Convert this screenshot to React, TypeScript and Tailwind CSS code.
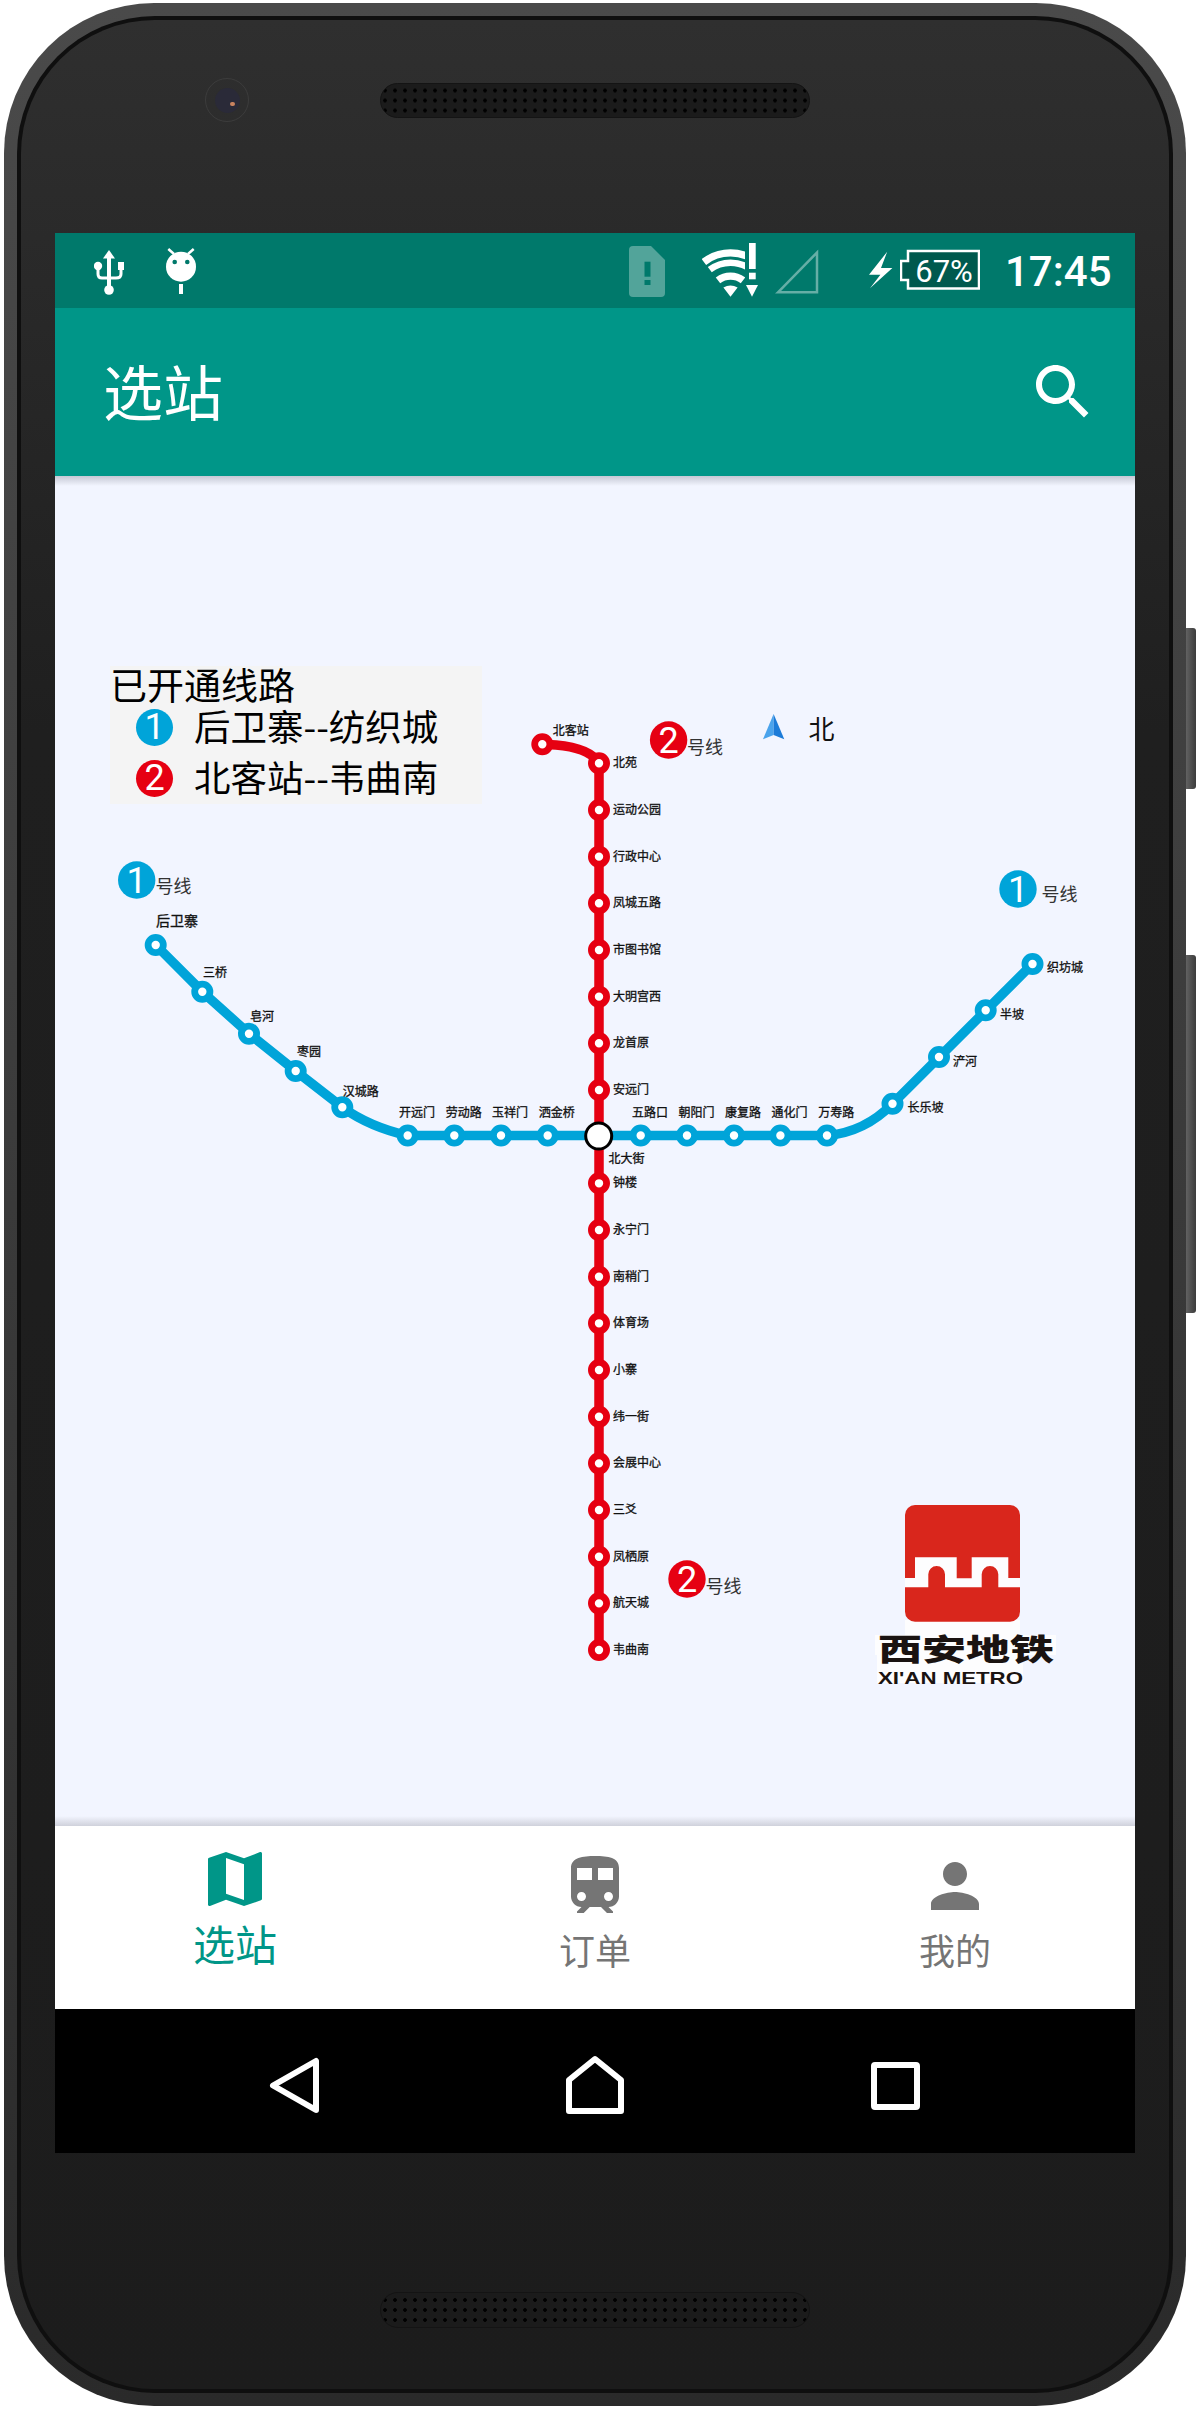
const line1 = [
  { name: '后卫寨', x: 155.7, y: 945, lx: 156, ly: 921, size: 14 },
  { name: '三桥', x: 202.3, y: 991.7, lx: 203, ly: 973 },
  { name: '皂河', x: 249, y: 1033.7, lx: 250, ly: 1017 },
  { name: '枣园', x: 295.7, y: 1071, lx: 297, ly: 1052 },
  { name: '汉城路', x: 342.3, y: 1107.3, lx: 342.7, ly: 1091.7 },
  { name: '开远门', x: 407.7, y: 1135.5, lx: 399, ly: 1113 },
  { name: '劳动路', x: 454.3, y: 1135.5, lx: 445.7, ly: 1113 },
  { name: '玉祥门', x: 501, y: 1135.5, lx: 492, ly: 1113 },
  { name: '洒金桥', x: 547.7, y: 1135.5, lx: 538.7, ly: 1113 },
  { name: '五路口', x: 640.7, y: 1135.5, lx: 632, ly: 1113 },
  { name: '朝阳门', x: 687, y: 1135.5, lx: 678.6, ly: 1113 },
  { name: '康复路', x: 734, y: 1135.5, lx: 725, ly: 1113 },
  { name: '通化门', x: 780.4, y: 1135.5, lx: 771.4, ly: 1113 },
  { name: '万寿路', x: 827, y: 1135.5, lx: 818.2, ly: 1113 },
  { name: '长乐坡', x: 892.5, y: 1103.7, lx: 907.5, ly: 1108.3 },
  { name: '浐河', x: 939, y: 1057, lx: 953, ly: 1061.7 },
  { name: '半坡', x: 985.7, y: 1010.3, lx: 1000, ly: 1015 },
  { name: '织坊城', x: 1032.5, y: 964, lx: 1047, ly: 968.3 },
]

const line2 = [
  '北苑', '运动公园', '行政中心', '凤城五路', '市图书馆', '大明宫西', '龙首原', '安远门',
  '', '钟楼', '永宁门', '南稍门', '体育场', '小寨', '纬一街', '会展中心', '三爻', '凤栖原', '航天城', '韦曲南',
]

const BLUE = '#00a4d9'
const RED = '#e60012'

const Node = ({ x, y, color }: { x: number; y: number; color: string }) => (
  <circle cx={x} cy={y} r={7.6} fill="#fff" stroke={color} strokeWidth={6.8} />
)

// station names are slightly heavier than the regular face in the picture
const Label = ({ x, y, size = 12, children }: { x: number; y: number; size?: number; children: string }) => (
  <text x={x} y={y - 1.5} fontSize={size} fill="#111" stroke="#111" strokeWidth={0.3} dominantBaseline="central">{children}</text>
)

const LineBadge = ({ x, y, num, color, tx, ty }: { x: number; y: number; num: string; color: string; tx: number; ty: number }) => (
  <g>
    <circle cx={x} cy={y} r={18.7} fill={color} />
    <text x={x} y={y + 1} fill="#fff" fontSize={36} textAnchor="middle" dominantBaseline="central" fontFamily="Roboto, sans-serif">{num}</text>
    <text x={tx - 1.5} y={ty - 1} fill="#333" fontSize={18} dominantBaseline="central">号线</text>
  </g>
)

const MetroMap = () => (
  <svg className="absolute inset-0 w-full h-full" viewBox="55 476 1080 1350">
    <path d="M542.3 744.3 L556 745 Q590 748 599 763.3 V1649.3" fill="none" stroke={RED} strokeWidth={9.5} />
    <path d="M155.7 945 L202.3 991.7 L249 1033.7 L295.7 1071 L342.3 1107.3 Q370 1127 407.7 1135.5 L827 1135.5 Q865 1132 892.5 1103.7 L1032.5 964" fill="none" stroke={BLUE} strokeWidth={9.5} />

    <Node x={542.3} y={744.3} color={RED} />
    <Label x={552.7} y={730.7}>北客站</Label>
    {line2.map((name, i) =>
      name ? (
        <g key={name}>
          <Node x={599} y={763.3 + 46.67 * i} color={RED} />
          <Label x={613} y={763.3 + 46.67 * i}>{name}</Label>
        </g>
      ) : null,
    )}
    <Label x={608.6} y={1159}>北大街</Label>

    {line1.map((s) => (
      <g key={s.name}>
        <Node x={s.x} y={s.y} color={BLUE} />
        <Label x={s.lx} y={s.ly} size={s.size || 12}>{s.name}</Label>
      </g>
    ))}
    <circle cx={598.7} cy={1136} r={13} fill="#fff" stroke="#000" strokeWidth={3} />

    <LineBadge x={136.7} y={880} num="1" color={BLUE} tx={157} ty={885.6} />
    <LineBadge x={668.6} y={740} num="2" color={RED} tx={688.6} ty={747} />
    <LineBadge x={1018} y={889} num="1" color={BLUE} tx={1043} ty={894} />
    <LineBadge x={687} y={1579} num="2" color={RED} tx={707} ty={1586} />

    {/* north arrow */}
    <polygon points="773.6,714 763,739.3 773.6,735" fill="#4aa3ec" />
    <polygon points="773.6,714 784.3,739.3 773.6,735" fill="#1c7bd8" />
    <text x={808.5} y={727} fontSize={26} fill="#111" dominantBaseline="central">北</text>

    {/* logo */}
    <rect x={905} y={1620} width={115} height={16} fill="#fdfdfe" />
    <rect x={875} y={1635} width={181} height={20} fill="#fdfdfe" />
    <rect x={877} y={1655} width={146} height={28} fill="#fdfdfe" />
    <rect x={905} y={1505} width={115} height={116.7} rx={10} fill="#d9261c" />
    <path d="M905 1578 H915 V1557.3 H956.7 V1578.3 H971.7 V1557.3 H1008.3 V1578 H1020 V1587.3 H998.3 V1574.3 A8.3 8.3 0 0 0 981.7 1574.3 V1587.3 H945 V1574.3 A8.3 8.3 0 0 0 928.3 1574.3 V1587.3 H905 Z" fill="#fdfdfe" />
    <text x={878} y={1647} fontSize={30} fontWeight={900} fill="#1a1311" dominantBaseline="central" textLength={176} lengthAdjust="spacingAndGlyphs">西安地铁</text>
    <text x={878} y={1678} fontSize={17} fontWeight={700} fill="#1a1311" dominantBaseline="central" textLength={145} lengthAdjust="spacingAndGlyphs" fontFamily="'Liberation Sans', sans-serif">XI'AN METRO</text>
  </svg>
)

const Legend = () => (
  <div className="absolute left-[55px] top-[190px] w-[372px] h-[138px] bg-[#f4f4f4] text-black text-[36.5px]">
    <div className="h-[38px] text-[37px] leading-[36px]">已开通线路</div>
    <div className="h-[46px] flex items-center pl-[26px] gap-[21px]">
      <span className="w-[37px] h-[37px] rounded-full bg-[#00a4d9] text-white flex items-center justify-center font-['Roboto',sans-serif] text-[36px]">1</span>
      <span className="-mt-[2px]">后卫寨--纺织城</span>
    </div>
    <div className="h-[46px] mt-[5px] flex items-center pl-[26px] gap-[21px]">
      <span className="w-[37px] h-[37px] rounded-full bg-[#e60012] text-white flex items-center justify-center font-['Roboto',sans-serif] text-[36px]">2</span>
      <span className="-mt-[2px]">北客站--韦曲南</span>
    </div>
  </div>
)

const StatusBar = () => (
  <div className="h-[75px] bg-[#00796b] flex text-white">
    {/* usb */}
    <svg className="ml-[39px]" width="30" height="75" viewBox="0 0 30 75" fill="#fff">
      <polygon points="15,17 21,25.5 9,25.5" />
      <rect x="13" y="25" width="4" height="32" />
      <circle cx="15" cy="57" r="4.8" />
      <circle cx="4" cy="33" r="4.2" />
      <rect x="24" y="29" width="6" height="8" />
      <path d="M4 33 V41 Q4 45 8 45 H22 Q27 45 27 41 V36" fill="none" stroke="#fff" strokeWidth="3" />
    </svg>
    {/* android debug */}
    <svg className="ml-[42px]" width="30" height="75" viewBox="0 0 30 75" fill="#fff">
      <circle cx="15" cy="33.7" r="15" />
      <rect x="13" y="51" width="4" height="10" />
      <path d="M2.3 16 L8 21 M27.7 16 L22 21" stroke="#fff" strokeWidth="2.5" />
      <circle cx="8.7" cy="29" r="2.3" fill="#00796b" />
      <circle cx="21.3" cy="29" r="2.3" fill="#00796b" />
    </svg>
    {/* sim */}
    <svg className="ml-[433px]" width="36" height="75" viewBox="0 0 36 75">
      <path d="M4 13 H22 L36 27 V60 Q36 64 32 64 H4 Q0 64 0 60 V17 Q0 13 4 13 Z" fill="#fff" fillOpacity="0.32" />
      <rect x="15.5" y="28.7" width="6" height="15" fill="#00796b" />
      <rect x="15.5" y="47" width="6" height="5" fill="#00796b" />
    </svg>
    {/* wifi */}
    <svg className="ml-[37px]" width="56" height="75" viewBox="0 0 56 75" fill="#fff">
      <clipPath id="wifi-clip"><rect x="0" y="0" width="43" height="75" /></clipPath>
      <g clipPath="url(#wifi-clip)" fill="none" stroke="#fff">
        <path d="M1.9 29 A43.7 43.7 0 0 1 55.1 29" strokeWidth="7.3" />
        <path d="M7.8 36.7 A34 34 0 0 1 49.2 36.7" strokeWidth="6.5" />
        <path d="M16 47.4 A20.5 20.5 0 0 1 41 47.4" strokeWidth="7.3" />
      </g>
      <path d="M28.5 63.7 L21.4 54.4 Q28.5 50.5 35.6 54.4 Z" />
      <rect x="47" y="10" width="6.7" height="26" />
      <rect x="47" y="39.7" width="6.7" height="6.6" />
      <polygon points="44,52 56,52 50,63.7" />
    </svg>
    {/* signal */}
    <svg className="ml-[17px]" width="44" height="75" viewBox="0 0 44 75">
      <path d="M3 59.3 L42 19.5 V59.3 Z" fill="none" stroke="#fff" strokeOpacity="0.4" strokeWidth="2.5" />
    </svg>
    {/* bolt */}
    <svg className="ml-[50px]" width="24" height="75" viewBox="0 0 24 75" fill="#fff">
      <polygon points="18.2,18.7 0,41.7 11.4,41.7 1,55.3 23.4,35 12,35" />
    </svg>
    {/* battery */}
    <svg className="ml-[7px]" width="80" height="75" viewBox="0 0 80 75">
      <path d="M8 18 H79 V55.5 H8 V47 H1 V28 H8 Z" fill="#00594e" stroke="#fff" strokeWidth="2.5" />
      <text x="44" y="38.7" fill="#fff" fontSize="31" textAnchor="middle" dominantBaseline="central" fontFamily="Roboto, sans-serif">67%</text>
    </svg>
    <span className="ml-[25px] font-['Roboto',sans-serif] font-medium text-[42px] leading-[75px] mt-[1px]">17:45</span>
  </div>
)

const tabs = [
  {
    label: '选站',
    active: true,
    d: 'M20.5 3l-.16.03L15 5.1 9 3 3.36 4.9c-.21.07-.36.25-.36.48V20.5c0 .28.22.5.5.5l.16-.03L9 18.9l6 2.1 5.64-1.9c.21-.07.36-.25.36-.48V3.5c0-.28-.22-.5-.5-.5zM15 19l-6-2.11V5l6 2.11V19z',
  },
  {
    label: '订单',
    active: false,
    d: 'M12 2c-4 0-8 .5-8 4v9.5C4 17.43 5.57 19 7.5 19L6 20.5v.5h2.23l2-2H14l2 2h2v-.5L16.5 19c1.93 0 3.5-1.57 3.5-3.5V6c0-3.5-3.58-4-8-4zM7.5 17c-.83 0-1.5-.67-1.5-1.5S6.67 14 7.5 14s1.5.67 1.5 1.5S8.33 17 7.5 17zm3.5-7H6V6h5v4zm2 0V6h5v4h-5zm3.5 7c-.83 0-1.5-.67-1.5-1.5s.67-1.5 1.5-1.5 1.5.67 1.5 1.5-.67 1.5-1.5 1.5z',
  },
  {
    label: '我的',
    active: false,
    d: 'M12 12c2.21 0 4-1.79 4-4s-1.79-4-4-4-4 1.79-4 4 1.79 4 4 4zm0 2c-2.67 0-8 1.34-8 4v2h16v-2c0-2.66-5.33-4-8-4z',
  },
]

const Speaker = ({ className }: { className: string }) => (
  <div className={`w-[430px] mx-auto rounded-[18px] border border-[#141414] bg-[#1b1b1b] bg-[radial-gradient(circle,#000_1.5px,transparent_2.2px)] bg-[length:10px_10px] bg-center ${className}`} />
)

const App = () => {
  return (
    <div className="w-[1198px] h-[2409px] bg-white pt-[3px] pl-[4px] overflow-hidden font-['Noto_Sans_CJK_SC',sans-serif]">
      <div className="relative w-[1182px] h-[2403px]">
        {/* side buttons */}
        <div className="absolute left-[1180px] top-[625px] w-[12px] h-[161px] rounded-r-[3px] bg-gradient-to-r from-[#6a6a6a] to-[#3c3c3c]" />
        <div className="absolute left-[1180px] top-[952px] w-[12px] h-[358px] rounded-r-[3px] bg-gradient-to-r from-[#6a6a6a] to-[#3c3c3c]" />

        <div className="relative h-full rounded-[150px] bg-gradient-to-b from-[#4a4a4a] via-[#3a3a3a] to-[#2a2a2a] p-[13px]">
          <div className="h-full rounded-[138px] bg-[#0f0f0f] p-[4px]">
            <div className="relative h-full rounded-[134px] bg-gradient-to-b from-[#2f2f2f] via-[#1f1f1f] via-30% to-[#1c1c1c] px-[34px] pt-[63px] pb-[60px] flex flex-col">
              <div className="absolute left-[184px] top-[58px] w-[44px] h-[44px] rounded-full border border-[#3c3c3c] flex items-center justify-center">
                <div className="relative w-[25px] h-[25px] rounded-full bg-[#2a2a38]">
                  <div className="absolute left-[15px] top-[14px] w-[5px] h-[4px] rounded-full bg-[#c9835f]" />
                </div>
              </div>

              <Speaker className="h-[35px]" />

              <div className="mt-[115px] w-[1080px] flex flex-col">
                <StatusBar />

                <div className="h-[168px] bg-[#009688] flex items-center justify-between pl-[48px] pr-[36px]">
                  <span className="text-white text-[60px] leading-none -mt-[5px]">选站</span>
                  <svg width="72" height="72" viewBox="0 0 24 24" fill="#fff">
                    <path d="M15.5 14h-.79l-.28-.27C15.41 12.59 16 11.11 16 9.5 16 5.91 13.09 3 9.5 3S3 5.91 3 9.5 5.91 16 9.5 16c1.61 0 3.09-.59 4.23-1.57l.27.28v.79l5 4.99L20.49 19l-4.99-5zm-6 0C7.01 14 5 11.99 5 9.5S7.01 5 9.5 5 14 7.01 14 9.5 11.99 14 9.5 14z" />
                  </svg>
                </div>

                <div className="relative h-[1350px] bg-[#f2f5ff]">
                  <MetroMap />
                  <Legend />
                  <div className="absolute top-0 left-0 right-0 h-[10px] bg-gradient-to-b from-[#c5c8d4] to-transparent" />
                  <div className="absolute bottom-0 left-0 right-0 h-[10px] bg-gradient-to-t from-[#cfd1db] to-transparent" />
                </div>

                <div className="h-[183px] bg-white grid grid-cols-3">
                  {tabs.map((tab) => (
                    <div key={tab.label} className={`flex flex-col items-center ${tab.active ? 'pt-[17px] text-[#009688]' : 'pt-[24px] text-[#757575]'}`}>
                      <svg width="72" height="72" viewBox="0 0 24 24" fill="currentColor">
                        <path d={tab.d} />
                      </svg>
                      <span className={tab.active ? 'mt-[7px] text-[42px] leading-[42px]' : 'mt-[9px] text-[36px] leading-[36px]'}>{tab.label}</span>
                    </div>
                  ))}
                </div>

                <div className="h-[144px] bg-black">
                  <div className="w-[900px] h-full mx-auto grid grid-cols-3 justify-items-center">
                    <svg width="100" height="144" viewBox="0 0 100 144" fill="none" stroke="#fff" strokeWidth="6" strokeLinejoin="round">
                      <path d="M71 52 V101 L28 76.5 Z" />
                    </svg>
                    <svg width="100" height="144" viewBox="0 0 100 144" fill="none" stroke="#fff" strokeWidth="6" strokeLinejoin="round">
                      <path d="M50 50 L76 71 V102 H24 V71 Z" />
                    </svg>
                    <svg width="100" height="144" viewBox="0 0 100 144" fill="none" stroke="#fff" strokeWidth="6" strokeLinejoin="round">
                      <rect x="29" y="56" width="43" height="42" rx="1" />
                    </svg>
                  </div>
                </div>
              </div>

              <Speaker className="mt-[139px] h-[36px]" />
            </div>
          </div>
        </div>
      </div>
    </div>
  )
}

export default App
